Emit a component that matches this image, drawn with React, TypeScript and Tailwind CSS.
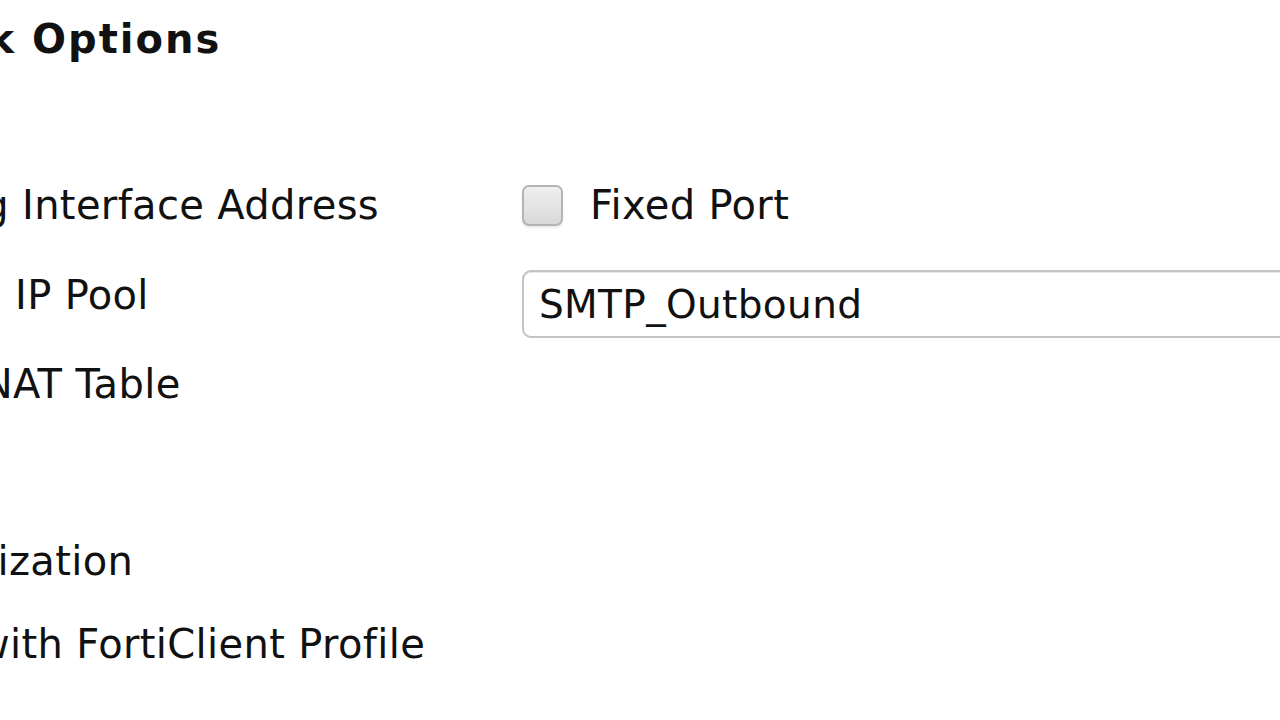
import React from 'react';

// label whose beginning runs off the left edge of the window
function Label({ hidden, shown, at }: { hidden: string; shown: string; at: string }) {
  return (
    <div className="flex whitespace-nowrap">
      <div className={`${at} shrink-0 flex justify-end`}>
        <span className="whitespace-pre">{hidden}</span>
      </div>
      <span>{shown}</span>
    </div>
  );
}

export default function App() {
  return (
    <div
      className="h-screen w-full overflow-hidden bg-white text-[#111111]"
      style={{ fontFamily: '"DejaVu Sans", Verdana, sans-serif' }}
    >
      <div className="pt-[19px] text-[40px] font-bold leading-[40px] tracking-[2px]">
        <Label hidden="Network " shown="Options" at="w-[32px]" />
      </div>

      <div className="mt-[101px] grid grid-cols-[522px_1fr] text-[40px] tracking-[0.35px]">
        <div className="leading-[90px]">
          <Label hidden="Use Outgoing " shown="Interface Address" at="w-[22px]" />
        </div>
        <div className="flex items-center gap-[27px] leading-[90px]">
          <span className="h-[41px] w-[41px] rounded-[7px] border-2 border-[#b4b4b4] bg-linear-to-b from-[#efefef] to-[#d9d9d9] shadow-[0_2px_2px_rgba(0,0,0,0.08)]" />
          <span>Fixed Port</span>
        </div>

        <div className="leading-[90px]">
          <Label hidden="Use Dynamic " shown="IP Pool" at="w-[15px]" />
        </div>
        <div className="min-w-0">
          <input
            readOnly
            value="SMTP_Outbound"
            className="mt-[20px] h-[68px] w-[820px] rounded-[9px] border-2 border-[#c3c3c3] bg-white pl-[15px] text-[39px] leading-normal tracking-[0.35px] text-[#111111] outline-none shadow-[inset_0_1px_0_#e8e8e8]"
          />
        </div>

        <div className="leading-[88px]">
          <Label hidden="Central N" shown="AT Table" at="w-[13px]" />
        </div>
        <div />

        <div className="h-[89px]" />
        <div />

        <div className="leading-[88px]">
          <Label hidden="WAN Optimi" shown="zation" at="w-[9px]" />
        </div>
        <div />

        <div className="leading-[78px]">
          <Label hidden="Endpoint Compliance w" shown="ith FortiClient Profile" at="w-[10px]" />
        </div>
        <div />
      </div>
    </div>
  );
}
